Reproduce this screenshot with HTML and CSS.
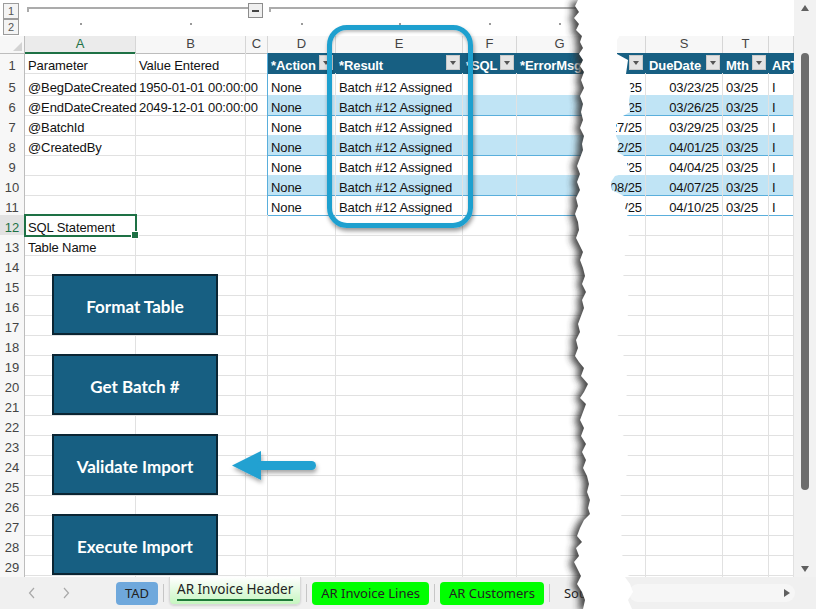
FILE: index.html
```html
<!DOCTYPE html>
<html lang="en">
<head>
<meta charset="utf-8">
<title>AR Invoice Header</title>
<link rel="stylesheet" href="styles.css">
</head>
<body>
<div class="app">
  <div class="main">
    <div class="sheet">
      <div class="outline">
        <div class="levels"><span class="lvl">1</span><span class="lvl">2</span></div>
        <div class="bar bar1"><span class="bline"></span><span class="minus"></span></div>
        <div class="bar bar2"><span class="bline"></span></div>
        <span class="dc"><i class="dot"></i></span>
        <span class="dc"><i class="dot"></i></span>
        <span class="dc"></span>
        <span class="dc"><i class="dot"></i></span>
        <span class="dc"><i class="dot"></i></span>
        <span class="dc"><i class="dot"></i></span>
        <span class="dc"><i class="dot"></i></span>
      </div>

      <div class="grid">
        <div class="row hdr">
          <div class="corner"></div><div class="sel">A</div><div>B</div><div>C</div><div>D</div><div>E</div><div>F</div><div>G</div><div></div><div>S</div><div>T</div><div></div>
        </div>
        <div class="row">
          <div class="rh">1</div><div>Parameter</div><div>Value Entered</div><div class="tl"></div>
          <div class="th"><span>*Action</span><i class="fb"></i></div>
          <div class="th"><span>*Result</span><i class="fb"></i></div>
          <div class="th"><span>*SQL</span><i class="fb"></i></div>
          <div class="th"><span>*ErrorMsg</span><i class="fb"></i></div>
          <div class="th end"><i class="fb"></i></div>
          <div class="th"><span>DueDate</span><i class="fb"></i></div>
          <div class="th"><span>Mth</span><i class="fb"></i></div>
          <div class="th"><span>ART</span></div>
        </div>
        <div class="row tall">
          <div class="rh">5</div><div>@BegDateCreated</div><div>1950-01-01 00:00:00</div><div class="tl"></div>
          <div class="t">None</div><div class="t">Batch #12 Assigned</div><div class="t"></div><div class="t"></div><div class="t r">02/21/25</div><div class="t r">03/23/25</div><div class="t">03/25</div><div class="t">I</div>
        </div>
        <div class="row">
          <div class="rh">6</div><div>@EndDateCreated</div><div>2049-12-01 00:00:00</div><div class="tl"></div>
          <div class="t b">None</div><div class="t b">Batch #12 Assigned</div><div class="t b"></div><div class="t b"></div><div class="t b r">02/24/25</div><div class="t b r">03/26/25</div><div class="t b">03/25</div><div class="t b">I</div>
        </div>
        <div class="row">
          <div class="rh">7</div><div>@BatchId</div><div></div><div class="tl"></div>
          <div class="t">None</div><div class="t">Batch #12 Assigned</div><div class="t"></div><div class="t"></div><div class="t r">02/27/25</div><div class="t r">03/29/25</div><div class="t">03/25</div><div class="t">I</div>
        </div>
        <div class="row">
          <div class="rh">8</div><div>@CreatedBy</div><div></div><div class="tl"></div>
          <div class="t b">None</div><div class="t b">Batch #12 Assigned</div><div class="t b"></div><div class="t b"></div><div class="t b r">03/02/25</div><div class="t b r">04/01/25</div><div class="t b">03/25</div><div class="t b">I</div>
        </div>
        <div class="row">
          <div class="rh">9</div><div></div><div></div><div class="tl"></div>
          <div class="t">None</div><div class="t">Batch #12 Assigned</div><div class="t"></div><div class="t"></div><div class="t r">03/05/25</div><div class="t r">04/04/25</div><div class="t">03/25</div><div class="t">I</div>
        </div>
        <div class="row">
          <div class="rh">10</div><div></div><div></div><div class="tl"></div>
          <div class="t b">None</div><div class="t b">Batch #12 Assigned</div><div class="t b"></div><div class="t b"></div><div class="t b r">03/08/25</div><div class="t b r">04/07/25</div><div class="t b">03/25</div><div class="t b">I</div>
        </div>
        <div class="row">
          <div class="rh">11</div><div></div><div></div><div class="tl"></div>
          <div class="t">None</div><div class="t">Batch #12 Assigned</div><div class="t"></div><div class="t"></div><div class="t r">03/11/25</div><div class="t r">04/10/25</div><div class="t">03/25</div><div class="t">I</div>
        </div>
        <div class="row">
          <div class="rh selrh">12</div><div class="selc">SQL Statement</div><div></div><div></div><div></div><div></div><div></div><div></div><div></div><div></div><div></div><div></div>
        </div>
        <div class="row">
          <div class="rh">13</div><div>Table Name</div><div></div><div></div><div></div><div></div><div></div><div></div><div></div><div></div><div></div><div></div>
        </div>
        <div class="row"><div class="rh">14</div><div></div><div></div><div></div><div></div><div></div><div></div><div></div><div></div><div></div><div></div><div></div></div>
        <div class="row"><div class="rh">15</div><div></div><div></div><div></div><div></div><div></div><div></div><div></div><div></div><div></div><div></div><div></div></div>
        <div class="row"><div class="rh">16</div><div></div><div></div><div></div><div></div><div></div><div></div><div></div><div></div><div></div><div></div><div></div></div>
        <div class="row"><div class="rh">17</div><div></div><div></div><div></div><div></div><div></div><div></div><div></div><div></div><div></div><div></div><div></div></div>
        <div class="row"><div class="rh">18</div><div></div><div></div><div></div><div></div><div></div><div></div><div></div><div></div><div></div><div></div><div></div></div>
        <div class="row"><div class="rh">19</div><div></div><div></div><div></div><div></div><div></div><div></div><div></div><div></div><div></div><div></div><div></div></div>
        <div class="row"><div class="rh">20</div><div></div><div></div><div></div><div></div><div></div><div></div><div></div><div></div><div></div><div></div><div></div></div>
        <div class="row"><div class="rh">21</div><div></div><div></div><div></div><div></div><div></div><div></div><div></div><div></div><div></div><div></div><div></div></div>
        <div class="row"><div class="rh">22</div><div></div><div></div><div></div><div></div><div></div><div></div><div></div><div></div><div></div><div></div><div></div></div>
        <div class="row"><div class="rh">23</div><div></div><div></div><div></div><div></div><div></div><div></div><div></div><div></div><div></div><div></div><div></div></div>
        <div class="row"><div class="rh">24</div><div></div><div></div><div></div><div></div><div></div><div></div><div></div><div></div><div></div><div></div><div></div></div>
        <div class="row"><div class="rh">25</div><div></div><div></div><div></div><div></div><div></div><div></div><div></div><div></div><div></div><div></div><div></div></div>
        <div class="row"><div class="rh">26</div><div></div><div></div><div></div><div></div><div></div><div></div><div></div><div></div><div></div><div></div><div></div></div>
        <div class="row"><div class="rh">27</div><div></div><div></div><div></div><div></div><div></div><div></div><div></div><div></div><div></div><div></div><div></div></div>
        <div class="row"><div class="rh">28</div><div></div><div></div><div></div><div></div><div></div><div></div><div></div><div></div><div></div><div></div><div></div></div>
        <div class="row"><div class="rh">29</div><div></div><div></div><div></div><div></div><div></div><div></div><div></div><div></div><div></div><div></div><div></div></div>
        <div class="row"><div class="rh">30</div><div></div><div></div><div></div><div></div><div></div><div></div><div></div><div></div><div></div><div></div><div></div></div>
      </div>
    </div>
    <div class="vscroll">
      <span class="up"></span>
      <span class="thumb"></span>
      <span class="down"></span>
    </div>
  </div>

  <div class="tabbar">
    <div class="nav">
      <svg width="8" height="12" viewBox="0 0 8 12"><polyline points="6,1 1.5,6 6,11" fill="none" stroke="#a8a8a8" stroke-width="1.2"/></svg>
      <svg width="8" height="12" viewBox="0 0 8 12"><polyline points="2,1 6.5,6 2,11" fill="none" stroke="#a8a8a8" stroke-width="1.2"/></svg>
    </div>
    <div class="tab tad">TAD</div>
    <span class="sep"></span>
    <div class="tab active"><span>AR Invoice Header</span></div>
    <span class="sep"></span>
    <div class="tab green">AR Invoice Lines</div>
    <span class="sep"></span>
    <div class="tab green">AR Customers</div>
    <span class="sep"></span>
    <div class="tab plain">Source</div>
    <div class="hscroll"><span class="rarrow"></span></div>
  </div>

  <div class="shapes">
    <div class="shape">Format Table</div>
    <div class="shape">Get Batch #</div>
    <div class="shape">Validate Import</div>
    <div class="shape">Execute Import</div>
  </div>

  <div class="callout"></div>

  <svg class="arrow" width="100" height="44" viewBox="226 446 100 44">
    <defs>
      <filter id="ash" x="-20%" y="-40%" width="140%" height="180%">
        <feDropShadow dx="1" dy="3" stdDeviation="2" flood-color="#000" flood-opacity="0.35"/>
      </filter>
    </defs>
    <g filter="url(#ash)" fill="#22a1d1">
      <path d="M232 465.5 L261 451 L261 480 Z"/>
      <rect x="257" y="461" width="59" height="9" rx="4.5"/>
    </g>
  </svg>

  <svg class="tear" width="120" height="609" viewBox="540 0 120 609">
    <defs>
      <filter id="tsh" x="-40%" y="-5%" width="180%" height="110%">
        <feGaussianBlur stdDeviation="3.5"/>
      </filter>
    </defs>
    <polygon fill="#333333" opacity="0.9" transform="translate(-5 1)" filter="url(#tsh)"
      points="578,0 575,6 579,12 574,18 579,24 576,30 582,36 580,42 583,48 579,54 583,60 580,66 584,72 581,80 584,88 580,96 583,104 581,112 583,120 580,128 584,136 582,144 583,150 580,158 577,166 580,174 577,182 580,190 576,198 578,206 575,214 578,222 579,230 576,238 580,246 583,252 580,260 583,268 585,276 582,284 586,292 582,300 584,308 581,316 578,324 580,332 576,340 578,348 575,356 579,362 584,368 581,376 588,384 584,392 580,398 586,404 583,412 580,420 584,428 581,436 586,444 582,452 586,460 583,468 587,476 589,484 587,492 590,500 588,508 590,514 584,520 580,528 577,536 582,542 576,548 579,556 574,562 578,570 581,576 577,584 582,592 585,600 583,609 600,609 600,0"/>
    <polygon fill="#ffffff"
      points="578,0 575,6 579,12 574,18 579,24 576,30 582,36 580,42 583,48 579,54 583,60 580,66 584,72 581,80 584,88 580,96 583,104 581,112 583,120 580,128 584,136 582,144 583,150 580,158 577,166 580,174 577,182 580,190 576,198 578,206 575,214 578,222 579,230 576,238 580,246 583,252 580,260 583,268 585,276 582,284 586,292 582,300 584,308 581,316 578,324 580,332 576,340 578,348 575,356 579,362 584,368 581,376 588,384 584,392 580,398 586,404 583,412 580,420 584,428 581,436 586,444 582,452 586,460 583,468 587,476 589,484 587,492 590,500 588,508 590,514 584,520 580,528 577,536 582,542 576,548 579,556 574,562 578,570 581,576 577,584 582,592 585,600 583,609 632,609 628,600 633,592 630,584 625,577 630,575 624,568 626,560 622,555 634,548 626,540 621,535 627,528 624,520 621,515 628,508 626,500 620,495 627,488 632,482 626,475 620,470 624,462 628,455 621,448 617,440 624,435 627,428 622,420 617,414 624,406 622,400 628,394 624,386 628,378 624,370 617,362 624,355 620,348 625,340 617,335 623,328 625,320 630,312 627,305 630,298 626,292 628,285 626,278 620,272 624,265 627,258 622,252 630,245 627,238 631,232 628,226 626,218 629,212 622,206 628,198 612,190 611,182 615,176 630,172 627,164 628,158 617,152 619,142 616,136 616,120 630,112 629,100 631,90 629,80 626,74 628,60 617,54 617,40 622,32 630,24 640,14 650,0"/>
  </svg>
</div>
</body>
</html>
```

FILE: styles.css
```css
* { box-sizing: border-box; margin: 0; padding: 0; }

:root {
  --cols: 25px 111px 110px 22px 68px 127px 54px 86px 43px 77px 46px 25px;
  --blue: #175f82;
  --grid: #e1e1e1;
  --tline: #5aafdc;
  --green: #1e7145;
}

body {
  margin: 0;
  width: 816px;
  height: 609px;
  overflow: hidden;
  background: #ffffff;
  font-family: "Liberation Sans", Arial, sans-serif;
  font-size: 13px;
  color: #111;
}

.app {
  position: relative;
  width: 816px;
  height: 609px;
  overflow: hidden;
  display: flex;
  flex-direction: column;
}

.main {
  display: flex;
  height: 577px;
  flex: none;
}

.sheet {
  width: 794px;
  height: 577px;
  overflow: hidden;
  display: flex;
  flex-direction: column;
}

/* ---------- outline (grouping) area ---------- */
.outline {
  display: grid;
  grid-template-columns: var(--cols);
  grid-template-rows: 18px 18px;
  height: 36px;
  flex: none;
}
.levels {
  grid-row: 1 / 3;
  grid-column: 1;
  display: flex;
  flex-direction: column;
  padding: 3px 0 0 3px;
}
.lvl {
  width: 16px;
  height: 16px;
  border: 1px solid #9c9c9c;
  background: #f4f4f4;
  font-size: 11px;
  line-height: 14px;
  color: #555;
  text-align: center;
}
.bar {
  grid-row: 1;
  display: flex;
  align-items: flex-start;
  padding-top: 7px;
}
.bar1 { grid-column: 2 / 5; padding-left: 2px; padding-right: 5px; }
.bar2 { grid-column: 5 / 9; padding-left: 1px; }
.bline {
  flex: 1;
  height: 5px;
  border-top: 2px solid #ababab;
  border-left: 2px solid #ababab;
}
.minus {
  width: 15px;
  height: 15px;
  margin-top: -4px;
  border: 1px solid #8c8c8c;
  background: #efefef;
  display: flex;
  align-items: center;
  justify-content: center;
}
.minus::after {
  content: "";
  width: 7px;
  height: 2px;
  background: #444;
}
.dc {
  grid-row: 2;
  display: flex;
  justify-content: center;
  padding-top: 5px;
}
.dot {
  width: 2px;
  height: 2px;
  background: #9a9a9a;
}

/* ---------- cells ---------- */
.grid {
  display: flex;
  flex-direction: column;
}
.row {
  display: grid;
  grid-template-columns: var(--cols);
  height: 20px;
  flex: none;
}
.row.tall { height: 22px; }
.row > * {
  min-width: 0;
  border-right: 1px solid var(--grid);
  border-bottom: 1px solid var(--grid);
  padding: 5px 3px 0;
  line-height: 15px;
  white-space: nowrap;
  font-size: 13px;
  letter-spacing: -0.1px;
  color: #111;
}
.row.tall > * { padding-top: 7px; }

.row .rh {
  text-align: center;
  padding-left: 0;
  padding-right: 0;
  color: #444;
  background: #f7f7f7;
  border-right-color: #bdbdbd;
}
.row .rh.selrh {
  background: #e2e2e2;
  color: var(--green);
}

.row.hdr { height: 17px; }
.row.hdr > * {
  padding: 0;
  text-align: center;
  line-height: 16px;
  background: #f7f7f7;
  color: #444;
  border-right-color: #d6d6d6;
  border-bottom-color: #bdbdbd;
}
.row.hdr > .sel {
  color: var(--green);
  background: #ebebeb;
  border-bottom: 2px solid var(--green);
}
.row.hdr > .corner {
  position: relative;
  border-right-color: #bdbdbd;
}
.corner::after {
  content: "";
  position: absolute;
  right: 2px;
  bottom: 2px;
  border-left: 9px solid transparent;
  border-bottom: 9px solid #d3d3d3;
}

.row > .tl { border-right-color: var(--tline); }
.row > .t { border-bottom-color: var(--tline); }
.row > .b { background: #c0e4f5; }
.row > .r {
  display: flex;
  justify-content: flex-end;
}

.row > .th {
  background: var(--blue);
  border-right-color: var(--blue);
  border-bottom-color: var(--blue);
  color: #ffffff;
  font-weight: 700;
  display: flex;
  align-items: flex-start;
  justify-content: space-between;
  padding: 0 2px 0 3px;
}
.row > .th.end { justify-content: flex-end; }
.th span { padding-top: 5px; line-height: 15px; }
.fb {
  flex: none;
  width: 14px;
  height: 15px;
  margin-top: 2px;
  background: #e4e4e4;
  border: 1px solid #c9c9c9;
  display: flex;
  align-items: center;
  justify-content: center;
}
.fb::before {
  content: "";
  border-left: 3.5px solid transparent;
  border-right: 3.5px solid transparent;
  border-top: 4px solid #555;
}

.row > .selc {
  position: relative;
  z-index: 1;
  outline: 2px solid var(--green);
  outline-offset: -1px;
}
.selc::after {
  content: "";
  position: absolute;
  right: -4px;
  bottom: -4px;
  width: 6px;
  height: 6px;
  background: var(--green);
  border: 1px solid #fff;
}

/* ---------- vertical scrollbar ---------- */
.vscroll {
  width: 22px;
  height: 577px;
  background: #f2f2f2;
  display: flex;
  flex-direction: column;
  align-items: center;
}
.up {
  margin-top: 5px;
  border-left: 4px solid transparent;
  border-right: 4px solid transparent;
  border-bottom: 6px solid #606060;
}
.thumb {
  width: 8px;
  height: 437px;
  margin-top: 42px;
  border-radius: 4px;
  background: #6d6d6d;
}
.down {
  margin-top: auto;
  margin-bottom: 5px;
  border-left: 4px solid transparent;
  border-right: 4px solid transparent;
  border-top: 6px solid #606060;
}

/* ---------- sheet tabs ---------- */
.tabbar {
  height: 32px;
  flex: none;
  background: #f0f0f0;
  display: flex;
  align-items: center;
  gap: 5px;
  font-family: "Noto Sans", "Liberation Sans", sans-serif;
}
.nav {
  width: 111px;
  display: flex;
  align-items: center;
  gap: 26px;
  padding-left: 28px;
}
.nav svg { display: block; }
.tab {
  height: 23px;
  padding: 0 9px;
  border-radius: 4px;
  font-size: 13px;
  color: #222;
  display: flex;
  align-items: center;
  white-space: nowrap;
}
.tab.tad {
  width: 42px;
  justify-content: center;
  padding: 0;
  background: #6fa8dc;
}
.tab.active {
  align-self: flex-start;
  height: 28px;
  padding: 0 7px;
  background: linear-gradient(#ffffff, #c6f6c0);
  border: 1px solid #d9d9d9;
  border-top: none;
  border-radius: 0 0 5px 5px;
  box-shadow: 0 1px 2px rgba(0, 0, 0, 0.12);
  font-size: 13.5px;
}
.tab.active span {
  border-bottom: 2px solid #1f7a3a;
  padding-bottom: 1px;
  line-height: 18px;
}
.tab.green { background: #00ff00; }
.tab.plain { background: transparent; }
.sep {
  width: 1px;
  height: 18px;
  background: #c6c6c6;
}
.hscroll {
  margin-left: auto;
  margin-right: 21px;
  width: 166px;
  height: 18px;
  border-radius: 9px;
  background: #f6f6f6;
  display: flex;
  align-items: center;
  justify-content: flex-end;
  padding-right: 5px;
}
.rarrow {
  border-top: 4px solid transparent;
  border-bottom: 4px solid transparent;
  border-left: 6px solid #606060;
}

/* ---------- floating objects ---------- */
.shapes {
  position: absolute;
  left: 52px;
  top: 274px;
  display: flex;
  flex-direction: column;
  gap: 19px;
}
.shape {
  width: 166px;
  height: 61px;
  background: var(--blue);
  border: 2px solid #0b2533;
  color: #ffffff;
  font-family: Lato, "Liberation Sans", sans-serif;
  font-weight: 700;
  font-size: 17px;
  display: flex;
  align-items: center;
  justify-content: center;
  padding-top: 3px;
}

.callout {
  position: absolute;
  left: 327px;
  top: 25px;
  width: 146px;
  height: 203px;
  border: 5px solid #1ea0cf;
  border-radius: 20px;
  box-shadow: 1px 3px 4px rgba(0, 0, 0, 0.4), inset 0 2px 3px rgba(0, 0, 0, 0.25);
}

.arrow {
  position: absolute;
  left: 226px;
  top: 446px;
}

.tear {
  position: absolute;
  left: 540px;
  top: 0;
}
```
